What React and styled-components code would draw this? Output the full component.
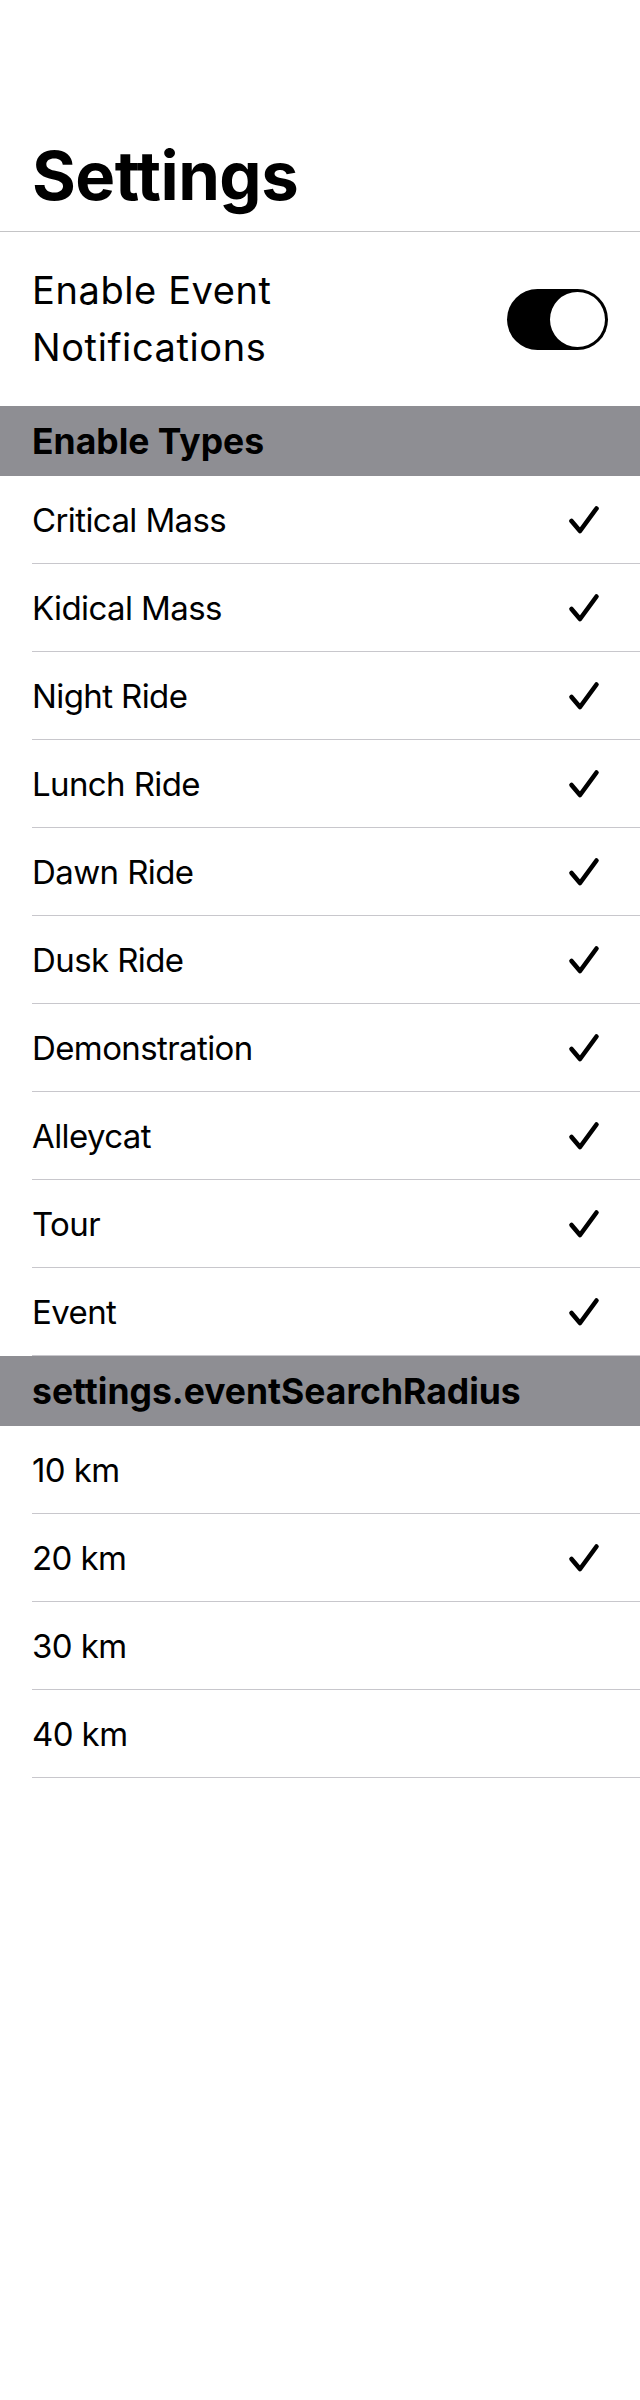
import React from "react";
import styled, { createGlobalStyle } from "styled-components";

const Global = createGlobalStyle`
  html, body { margin: 0; padding: 0; background: #ffffff; }
  body { font-family: Inter, "Noto Sans", "Liberation Sans", sans-serif; color: #000; }
`;

const Page = styled.div`
  width: 640px;
  min-height: 2400px;
  background: #fff;
`;

const TitleBar = styled.div`
  padding: 136px 32px 15px;
  border-bottom: 1px solid #c4c4c6;
`;

const Title = styled.h1`
  margin: 0;
  font-size: 67px;
  line-height: 80px;
  font-weight: 700;
  letter-spacing: -0.5px;
`;

const ToggleRow = styled.div`
  height: 174px;
  display: flex;
  align-items: center;
  justify-content: space-between;
  padding: 0 32px;
`;

const ToggleLabel = styled.div`
  font-size: 38px;
  line-height: 57px;
  letter-spacing: 0.6px;
  width: 300px;
`;

const Switch = styled.div`
  width: 101px;
  height: 61px;
  border-radius: 31px;
  background: #000;
  display: flex;
  align-items: center;
  justify-content: ${(p) => (p.$on ? "flex-end" : "flex-start")};
  padding: 0 3px;
  box-sizing: border-box;
`;

const Knob = styled.div`
  width: 55px;
  height: 55px;
  border-radius: 50%;
  background: #fff;
`;

const SectionHeader = styled.div`
  height: 70px;
  background: #8e8e93;
  padding: 0 32px;
  display: flex;
  align-items: center;
  font-size: 35.5px;
  font-weight: 700;
  letter-spacing: 0;
`;

const Row = styled.div`
  height: 88px;
  box-sizing: border-box;
  margin-left: 32px;
  padding-right: 40px;
  border-bottom: 1px solid #c8c7cc;
  display: flex;
  align-items: center;
  justify-content: space-between;
`;

const RowLabel = styled.span`
  font-size: 33px;
  letter-spacing: -0.6px;
`;

const Check = () => (
  <svg width="32" height="30" viewBox="0 0 32 30" aria-hidden="true">
    <path
      d="M3.5 16 L12 26 L28.5 3.5"
      fill="none"
      stroke="#000"
      strokeWidth="4.6"
      strokeLinecap="round"
      strokeLinejoin="round"
    />
  </svg>
);

const types = [
  "Critical Mass",
  "Kidical Mass",
  "Night Ride",
  "Lunch Ride",
  "Dawn Ride",
  "Dusk Ride",
  "Demonstration",
  "Alleycat",
  "Tour",
  "Event",
];

const radii = [
  { label: "10 km", on: false },
  { label: "20 km", on: true },
  { label: "30 km", on: false },
  { label: "40 km", on: false },
];

export default function App() {
  return (
    <Page>
      <Global />
      <TitleBar>
        <Title>Settings</Title>
      </TitleBar>
      <ToggleRow>
        <ToggleLabel>Enable Event Notifications</ToggleLabel>
        <Switch $on>
          <Knob />
        </Switch>
      </ToggleRow>
      <SectionHeader>Enable Types</SectionHeader>
      {types.map((t) => (
        <Row key={t}>
          <RowLabel>{t}</RowLabel>
          <Check />
        </Row>
      ))}
      <SectionHeader>settings.eventSearchRadius</SectionHeader>
      {radii.map((r) => (
        <Row key={r.label}>
          <RowLabel>{r.label}</RowLabel>
          {r.on && <Check />}
        </Row>
      ))}
    </Page>
  );
}
